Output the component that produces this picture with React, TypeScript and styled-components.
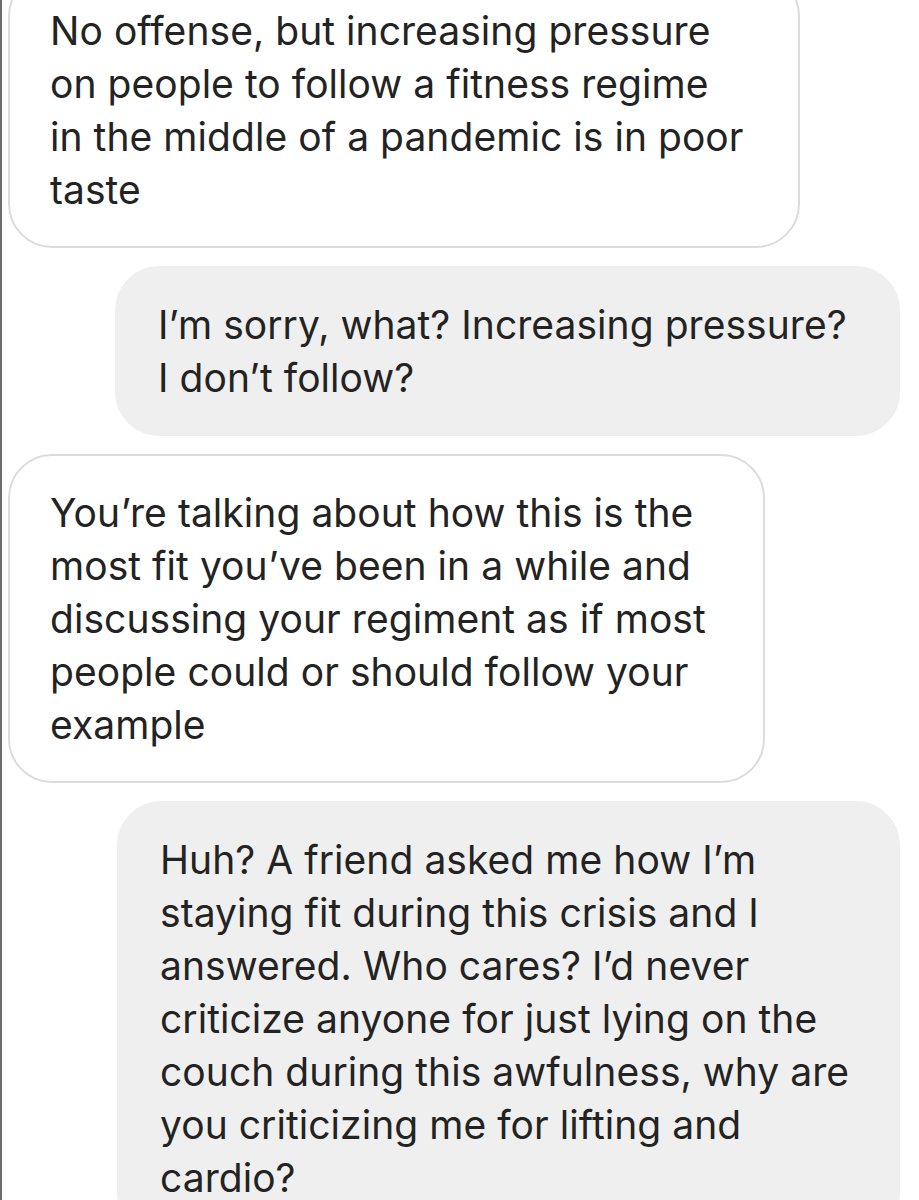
import styled, { createGlobalStyle } from "styled-components";

const GlobalStyle = createGlobalStyle`
  html, body {
    margin: 0;
    padding: 0;
    background: #ffffff;
  }
  body {
    font-family: "Inter", "Liberation Sans", sans-serif;
    -webkit-font-smoothing: antialiased;
  }
`;

const Page = styled.div`
  height: 1200px;
  overflow: hidden;
  border-left: 2px solid #6e6e6e;
  padding: 0 19px 0 6px;
  box-sizing: border-box;
`;

const Thread = styled.div`
  display: flex;
  flex-direction: column;
  gap: 18px;
  margin-top: -28px;
`;

const Bubble = styled.div<{ $mine?: boolean; $width: number }>`
  align-self: ${(p) => (p.$mine ? "flex-end" : "flex-start")};
  width: ${(p) => p.$width}px;
  box-sizing: border-box;
  padding: 30px 0 30px ${(p) => (p.$mine ? 41 : 40)}px;
  border-radius: 44px;
  background: ${(p) => (p.$mine ? "#efefef" : "#ffffff")};
  border: 2px solid ${(p) => (p.$mine ? "#efefef" : "#dcdcdc")};
  color: #232323;
  font-size: 39px;
  line-height: 53px;
  letter-spacing: 0.05px;
`;

const Line = styled.span`
  display: block;
  white-space: nowrap;
`;

type Message = {
  mine?: boolean;
  width: number;
  lines: string[];
};

const messages: Message[] = [
  {
    width: 792,
    lines: [
      "No offense, but increasing pressure",
      "on people to follow a fitness regime",
      "in the middle of a pandemic is in poor",
      "taste",
    ],
  },
  {
    mine: true,
    width: 785,
    lines: ["I’m sorry, what? Increasing pressure?", "I don’t follow?"],
  },
  {
    width: 757,
    lines: [
      "You’re talking about how this is the",
      "most fit you’ve been in a while and",
      "discussing your regiment as if most",
      "people could or should follow your",
      "example",
    ],
  },
  {
    mine: true,
    width: 783,
    lines: [
      "Huh? A friend asked me how I’m",
      "staying fit during this crisis and I",
      "answered. Who cares? I’d never",
      "criticize anyone for just lying on the",
      "couch during this awfulness, why are",
      "you criticizing me for lifting and",
      "cardio?",
    ],
  },
];

export default function App() {
  return (
    <>
      <GlobalStyle />
      <Page>
        <Thread>
          {messages.map((m, i) => (
            <Bubble key={i} $mine={m.mine} $width={m.width}>
              {m.lines.map((l, j) => (
                <Line key={j}>{l}</Line>
              ))}
            </Bubble>
          ))}
        </Thread>
      </Page>
    </>
  );
}
